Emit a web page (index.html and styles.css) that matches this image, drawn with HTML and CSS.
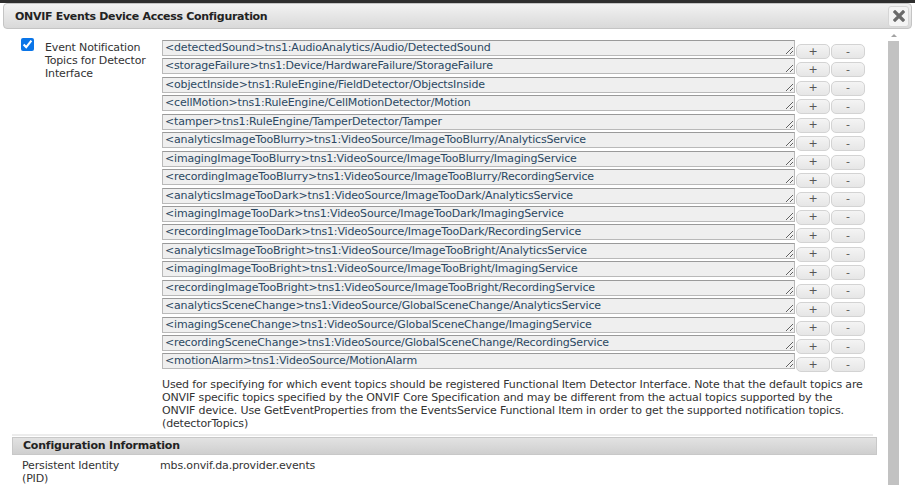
FILE: index.html
```html
<!DOCTYPE html>
<html>
<head>
<meta charset="utf-8">
<link rel="stylesheet" href="styles.css">
</head>
<body>
<div class="topline"></div>
<div class="titlebar">
  <span class="title">ONVIF Events Device Access Configuration</span>
  <span class="close"><svg width="12" height="12" viewBox="0 0 12 12"><path d="M2 2 L10 10 M10 2 L2 10" stroke="#6a6a6a" stroke-width="3.2" stroke-linecap="square"/></svg></span>
</div>
<div class="body">
  <div class="main">
    <div class="prop">
      <div class="check"><input type="checkbox" checked></div>
      <div class="label">Event Notification Topics for Detector Interface</div>
      <div class="values">
        <div class="row"><textarea rows="1">&lt;detectedSound&gt;tns1:AudioAnalytics/Audio/DetectedSound</textarea><button class="btn">+</button><button class="btn">-</button></div>
        <div class="row"><textarea rows="1">&lt;storageFailure&gt;tns1:Device/HardwareFailure/StorageFailure</textarea><button class="btn">+</button><button class="btn">-</button></div>
        <div class="row"><textarea rows="1">&lt;objectInside&gt;tns1:RuleEngine/FieldDetector/ObjectsInside</textarea><button class="btn">+</button><button class="btn">-</button></div>
        <div class="row"><textarea rows="1">&lt;cellMotion&gt;tns1:RuleEngine/CellMotionDetector/Motion</textarea><button class="btn">+</button><button class="btn">-</button></div>
        <div class="row"><textarea rows="1">&lt;tamper&gt;tns1:RuleEngine/TamperDetector/Tamper</textarea><button class="btn">+</button><button class="btn">-</button></div>
        <div class="row"><textarea rows="1">&lt;analyticsImageTooBlurry&gt;tns1:VideoSource/ImageTooBlurry/AnalyticsService</textarea><button class="btn">+</button><button class="btn">-</button></div>
        <div class="row"><textarea rows="1">&lt;imagingImageTooBlurry&gt;tns1:VideoSource/ImageTooBlurry/ImagingService</textarea><button class="btn">+</button><button class="btn">-</button></div>
        <div class="row"><textarea rows="1">&lt;recordingImageTooBlurry&gt;tns1:VideoSource/ImageTooBlurry/RecordingService</textarea><button class="btn">+</button><button class="btn">-</button></div>
        <div class="row"><textarea rows="1">&lt;analyticsImageTooDark&gt;tns1:VideoSource/ImageTooDark/AnalyticsService</textarea><button class="btn">+</button><button class="btn">-</button></div>
        <div class="row"><textarea rows="1">&lt;imagingImageTooDark&gt;tns1:VideoSource/ImageTooDark/ImagingService</textarea><button class="btn">+</button><button class="btn">-</button></div>
        <div class="row"><textarea rows="1">&lt;recordingImageTooDark&gt;tns1:VideoSource/ImageTooDark/RecordingService</textarea><button class="btn">+</button><button class="btn">-</button></div>
        <div class="row"><textarea rows="1">&lt;analyticsImageTooBright&gt;tns1:VideoSource/ImageTooBright/AnalyticsService</textarea><button class="btn">+</button><button class="btn">-</button></div>
        <div class="row"><textarea rows="1">&lt;imagingImageTooBright&gt;tns1:VideoSource/ImageTooBright/ImagingService</textarea><button class="btn">+</button><button class="btn">-</button></div>
        <div class="row"><textarea rows="1">&lt;recordingImageTooBright&gt;tns1:VideoSource/ImageTooBright/RecordingService</textarea><button class="btn">+</button><button class="btn">-</button></div>
        <div class="row"><textarea rows="1">&lt;analyticsSceneChange&gt;tns1:VideoSource/GlobalSceneChange/AnalyticsService</textarea><button class="btn">+</button><button class="btn">-</button></div>
        <div class="row"><textarea rows="1">&lt;imagingSceneChange&gt;tns1:VideoSource/GlobalSceneChange/ImagingService</textarea><button class="btn">+</button><button class="btn">-</button></div>
        <div class="row"><textarea rows="1">&lt;recordingSceneChange&gt;tns1:VideoSource/GlobalSceneChange/RecordingService</textarea><button class="btn">+</button><button class="btn">-</button></div>
        <div class="row"><textarea rows="1">&lt;motionAlarm&gt;tns1:VideoSource/MotionAlarm</textarea><button class="btn">+</button><button class="btn">-</button></div>
        <p class="desc">Used for specifying for which event topics should be registered Functional Item Detector Interface. Note that the default topics are ONVIF specific topics specified by the ONVIF Core Specification and may be different from the actual topics supported by the ONVIF device. Use GetEventProperties from the EventsService Functional Item in order to get the supported notification topics. (detectorTopics)</p>
      </div>
    </div>
    <div class="sep"></div>
    <div class="sechead">Configuration Information</div>
    <div class="info">
      <div class="infolabel">Persistent Identity (PID)</div>
      <div class="infovalue">mbs.onvif.da.provider.events</div>
    </div>
  </div>
  <div class="scroll">
    <div class="arrow"></div>
    <div class="thumb"></div>
  </div>
</div>
</body>
</html>
```
FILE: styles.css
```css
html, body {
  margin: 0;
  padding: 0;
  background: #ffffff;
  font-family: "DejaVu Sans", Verdana, sans-serif;
  font-size: 11px;
  letter-spacing: -0.15px;
  color: #333333;
  overflow: hidden;
}
.topline {
  height: 3px;
  background: #2e2e2e;
}
.titlebar {
  margin: 0 3px 0 3px;
  height: 24px;
  border: 1px solid #c4c4c4;
  border-radius: 4px;
  background: linear-gradient(#f2f2f2, #d9d9d9);
  display: flex;
  align-items: center;
  justify-content: space-between;
  padding: 0 2px 0 11px;
}
.title {
  font-weight: bold;
  font-size: 11px;
  color: #222222;
  letter-spacing: -0.3px;
}
.close {
  width: 19px;
  height: 19px;
  border: 1px solid #d6d6d6;
  border-radius: 3px;
  background: #f4f4f4;
  display: flex;
  align-items: center;
  justify-content: center;
}
.body {
  display: flex;
  height: 456px;
}
.main {
  width: 886px;
  padding-top: 11px;
}
.prop {
  display: flex;
  align-items: flex-start;
}
.check {
  width: 24px;
  padding-left: 21px;
  margin-top: -2px;
}
.check input {
  margin: 0;
  width: 13px;
  height: 13px;
  accent-color: #0a75e8;
}
.label {
  width: 117px;
  line-height: 13px;
  margin-top: 1px;
}
.values {
  width: 710px;
}
.row {
  display: flex;
  align-items: flex-start;
  height: 18.45px;
}
.row textarea {
  box-sizing: border-box;
  width: 633px;
  height: 16px;
  margin: 0;
  padding: 0 2px;
  border: 1px solid #b9b9b9;
  border-top-color: #9a9a9a;
  background: #efefef;
  font-family: "DejaVu Sans", Verdana, sans-serif;
  font-size: 11px;
  letter-spacing: -0.17px;
  line-height: 14px;
  color: #2b4862;
  overflow: hidden;
  white-space: nowrap;
}
.btn {
  box-sizing: border-box;
  width: 34px;
  height: 15px;
  margin: 4px 0 0 1px;
  padding: 0;
  border: 1px solid #d3d3d3;
  border-radius: 5px;
  background: linear-gradient(#f4f4f4, #e6e6e6);
  font-family: "DejaVu Sans", Verdana, sans-serif;
  font-size: 11px;
  line-height: 12px;
  color: #555555;
}
.desc {
  margin: 6px 0 0 0;
  width: 706px;
  line-height: 13px;
  color: #333333;
}
.sep {
  margin: 4px 0 0 12px;
  width: 861px;
  height: 2px;
  background: #ececec;
}
.sechead {
  margin: 1px 0 0 12px;
  box-sizing: border-box;
  width: 865px;
  height: 18px;
  padding-left: 10px;
  border: 1px solid #c8c8c8;
  background: linear-gradient(#e2e2e2, #cfcfcf);
  font-weight: bold;
  letter-spacing: -0.2px;
  line-height: 16px;
  color: #222222;
}
.info {
  display: flex;
  margin-top: 4px;
  padding-left: 22px;
  line-height: 13px;
}
.infolabel {
  width: 115px;
  margin-right: 23px;
}
.scroll {
  width: 15px;
  padding-left: 2px;
  margin-top: 2px;
}
.arrow {
  width: 0;
  height: 0;
  margin: 3px 0 0 3px;
  border-left: 3px solid transparent;
  border-right: 3px solid transparent;
  border-bottom: 3px solid #a3a3a3;
}
.thumb {
  margin-top: 4px;
  width: 11px;
  height: 460px;
  background: #c2c2c2;
}
```
